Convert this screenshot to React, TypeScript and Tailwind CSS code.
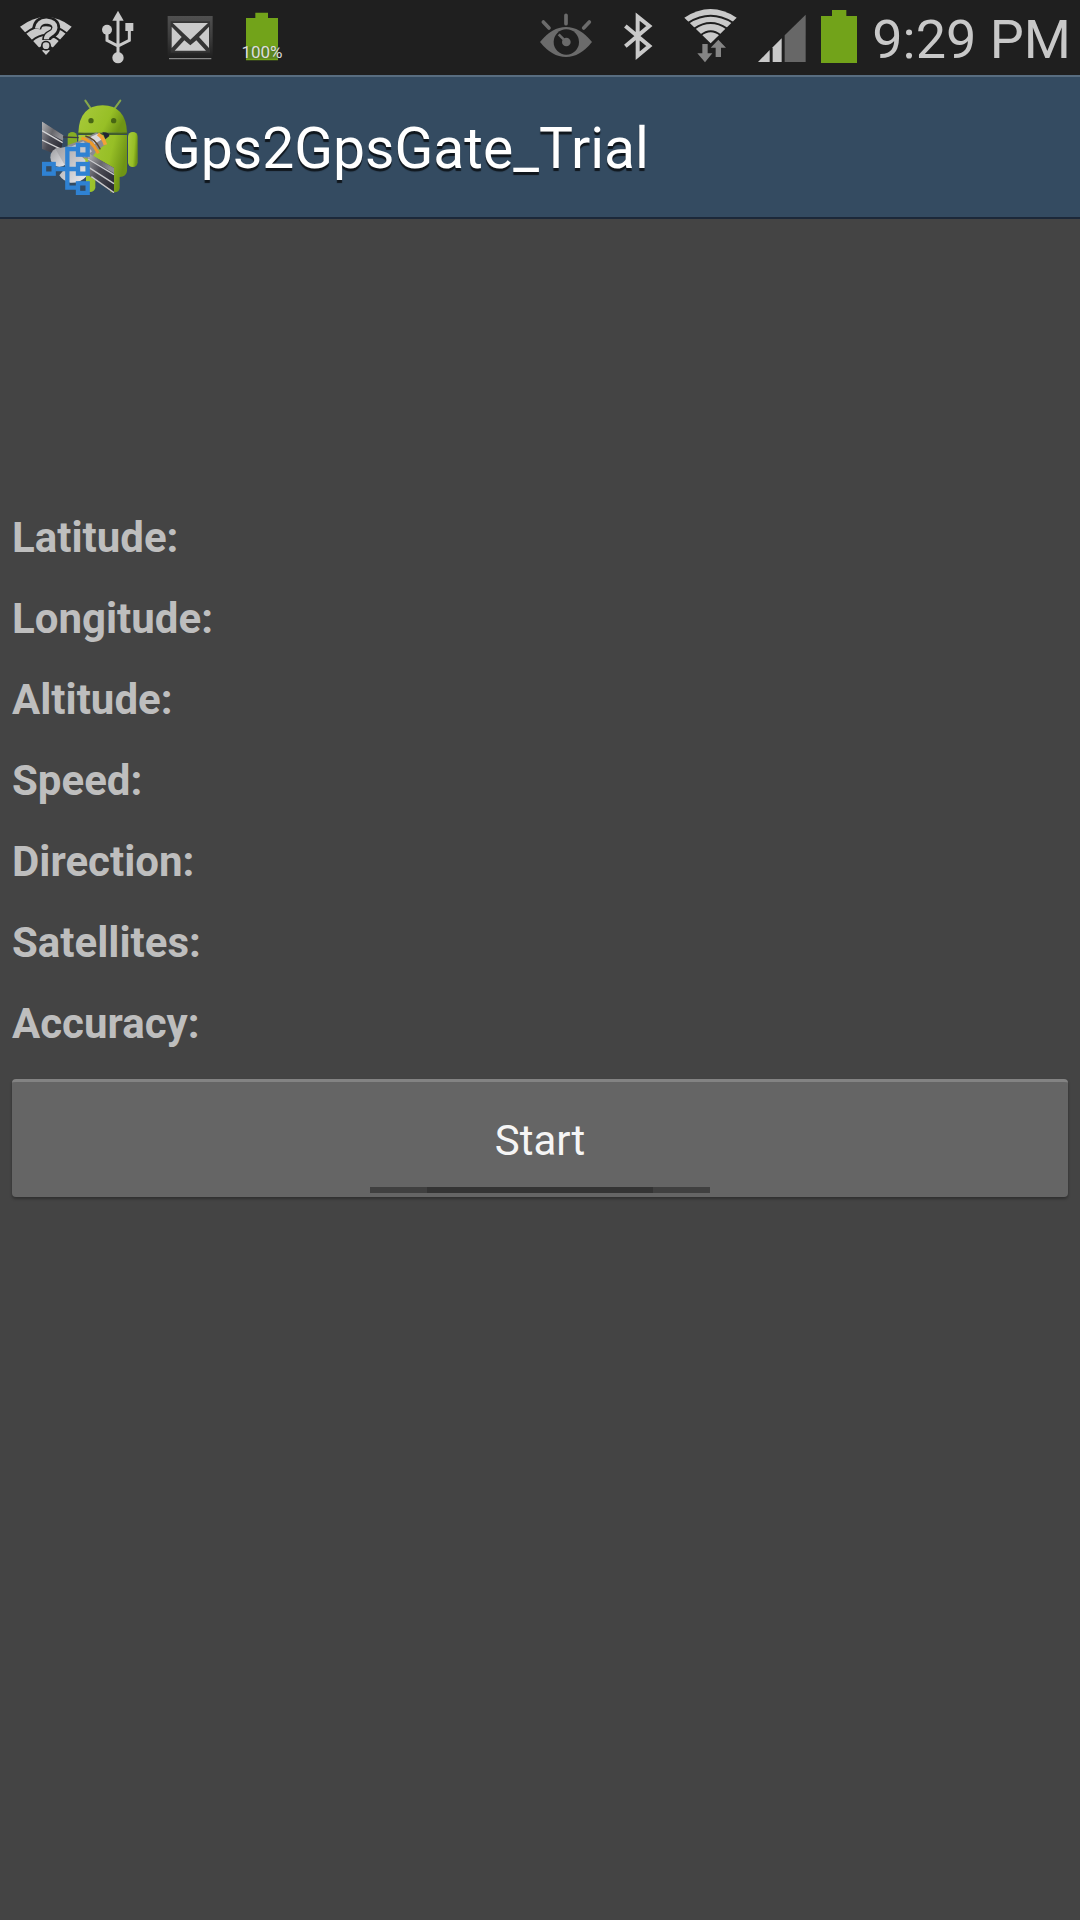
import type { ReactNode } from "react"

const FIELDS = ["Latitude", "Longitude", "Altitude", "Speed", "Direction", "Satellites", "Accuracy"]

function StatusIcon({ label, children }: { label: string; children: ReactNode }) {
  return (
    <svg className="h-[75px] w-[72px] shrink-0" viewBox="0 0 216 225" role="img" aria-label={label}>
      {children}
    </svg>
  )
}

function WifiUnknown() {
  return (
    <StatusIcon label="Wi-Fi networks available">
      <path d="M30 80Q108 22 185 80L108 165Z" fill="#c9c9c9" />
      <path d="M46 100Q108 52 170 100" fill="none" stroke="#1f1f1f" strokeWidth="6" />
      <path d="M66 122Q108 88 150 122" fill="none" stroke="#1f1f1f" strokeWidth="6" />
      <path d="M86 143Q108 126 130 143L122 153Q108 142 94 153Z" fill="#1f1f1f" />
      <g fill="none">
        <path d="M80 86Q84 62 108 62Q137 64 137 84Q137 97 122 103Q110 108 110 120" stroke="#1f1f1f" strokeWidth="27" />
        <path d="M82 86Q86 64 109 63Q135 65 135 83Q134 95 121 101Q109 107 109 118" stroke="#c9c9c9" strokeWidth="15" />
      </g>
      <circle cx="108" cy="137" r="15" fill="#1f1f1f" />
      <circle cx="108" cy="137" r="10" fill="#c9c9c9" />
    </StatusIcon>
  )
}

function Usb() {
  return (
    <StatusIcon label="USB connected">
      <path d="M108 32L125 62H91Z" fill="#c9c9c9" />
      <circle cx="108" cy="173" r="17" fill="#c9c9c9" />
      <circle cx="75" cy="89" r="15" fill="#c9c9c9" />
      <path d="M130 69H154V93H130Z" fill="#c9c9c9" />
      <path d="M108 58V160M75 98V121L108 138L142 121V90" fill="none" stroke="#c9c9c9" strokeWidth="9" />
    </StatusIcon>
  )
}

function Mail() {
  return (
    <StatusIcon label="New mail">
      <defs>
        <linearGradient id="mail" x1="0" y1="0" x2="0" y2="1">
          <stop offset="0" stopColor="#505050" />
          <stop offset="0.5" stopColor="#3c3c3c" />
          <stop offset="1" stopColor="#1d1d1d" />
        </linearGradient>
      </defs>
      <path d="M41 48H176V178H41Z" fill="url(#mail)" />
      <path d="M50 64H168V158H50Z" fill="#353535" />
      <path d="M56 69H162L109 119Z" fill="#cbcbcb" />
      <path d="M53 80L83 111L53 144Z" fill="#cbcbcb" />
      <path d="M165 80L135 111L165 144Z" fill="#cbcbcb" />
      <path d="M62 152L91 121L109 136L127 121L156 152Z" fill="#cbcbcb" />
      <path d="M45 176H172" stroke="#868686" strokeWidth="4" />
    </StatusIcon>
  )
}

function BatteryFull() {
  return (
    <div className="relative h-[75px] w-[72px] shrink-0">
      <StatusIcon label="Battery full">
        <path d="M88 38H126V54H156V181H60V54H88Z" fill="#72a31a" />
        <path d="M60 140H156V176H60Z" fill="#5c8520" />
      </StatusIcon>
      <span className="absolute inset-x-0 top-[42px] text-center text-[17px] leading-5 text-[#dddddd]">100%</span>
    </div>
  )
}

function SmartStay() {
  return (
    <StatusIcon label="Smart stay">
      <path d="M30 126Q66 81 108 81Q150 81 186 126Q150 171 108 171Q66 171 30 126Z" fill="#6b6b6b" />
      <circle cx="109" cy="126" r="38" fill="#1f1f1f" />
      <circle cx="109" cy="126" r="13" fill="#6b6b6b" />
      <path d="M86 103L101 118" stroke="#6b6b6b" strokeWidth="8" />
      <path d="M108 46V71M40 66L57 84M178 66L161 84" stroke="#6b6b6b" strokeWidth="11" strokeLinecap="round" />
    </StatusIcon>
  )
}

function Bluetooth() {
  return (
    <StatusIcon label="Bluetooth on">
      <path d="M70 78L142 138L107 167V50L142 78L70 139" fill="none" stroke="#c9c9c9" strokeWidth="12" />
    </StatusIcon>
  )
}

function Wifi() {
  return (
    <StatusIcon label="Wi-Fi connected">
      <path d="M31 53Q110 1 188 53L110 130Z" fill="#c9c9c9" />
      <path d="M44 68Q110 27 176 68" fill="none" stroke="#1f1f1f" strokeWidth="6" />
      <path d="M61 86Q110 52 159 86" fill="none" stroke="#1f1f1f" strokeWidth="6" />
      <path d="M80 106Q110 82 140 106" fill="none" stroke="#1f1f1f" strokeWidth="6" />
      <path d="M132 112L160 144H145V176H119V144H106Z" fill="#1f1f1f" />
      <path d="M133 119L156 143H141V171H125V143H110Z" fill="#858585" />
      <path d="M85 132H101V160H115L93 187L70 160H85Z" fill="#858585" />
    </StatusIcon>
  )
}

function Signal() {
  return (
    <StatusIcon label="Signal strength">
      <path d="M36 186L71 150V186Z" fill="#c9c9c9" />
      <path d="M80 186V142L107 115V186Z" fill="#c9c9c9" />
      <path d="M116 186V106L179 44V186Z" fill="#676767" />
    </StatusIcon>
  )
}

function StatusBar() {
  return (
    <div className="flex h-[75px] items-center justify-between bg-[#1f1f1f] pr-[9px] pl-[10px]">
      <div className="flex">
        <WifiUnknown />
        <Usb />
        <Mail />
        <BatteryFull />
      </div>
      <div className="flex items-center">
        <SmartStay />
        <Bluetooth />
        <Wifi />
        <Signal />
        <svg className="mx-[3px] h-[75px] w-9 shrink-0" viewBox="0 0 108 225" role="img" aria-label="Battery">
          <path d="M33 30H76V48H108V189H0V48H33Z" fill="#72a31a" />
        </svg>
        <time className="ml-3 pt-1 text-[54px] leading-[71px] whitespace-nowrap text-[#c8c8c8]">9:29 PM</time>
      </div>
    </div>
  )
}

function AppLogo() {
  return (
    <svg className="size-24 shrink-0" viewBox="36 57 288 288" aria-hidden="true">
      <defs>
        <linearGradient id="robot" x1="0" y1="0" x2="1" y2="0.3">
          <stop offset="0" stopColor="#a9cb3c" />
          <stop offset="0.7" stopColor="#97bf26" />
          <stop offset="1" stopColor="#6f9415" />
        </linearGradient>
        <linearGradient id="panel" x1="0" y1="0" x2="1" y2="0.4">
          <stop offset="0" stopColor="#b4b4b6" />
          <stop offset="0.6" stopColor="#67676c" />
          <stop offset="1" stopColor="#8d8d92" />
        </linearGradient>
        <linearGradient id="dark" x1="0" y1="0" x2="1" y2="0.6">
          <stop offset="0" stopColor="#9b9ba0" />
          <stop offset="0.5" stopColor="#4b4b54" />
          <stop offset="1" stopColor="#2e2e38" />
        </linearGradient>
        <linearGradient id="dish" x1="0" y1="0" x2="1" y2="1">
          <stop offset="0" stopColor="#9c9ca0" />
          <stop offset="1" stopColor="#ececef" />
        </linearGradient>
      </defs>

      {/* Robot */}
      <path d="M166 62L188 94M271 62L249 92" stroke="#86a84a" strokeWidth="6" strokeLinecap="round" />
      <path d="M145 158Q148 77 218 76Q288 77 291 158Z" fill="url(#robot)" />
      <path d="M145 165H291V272Q290 290 269 291V324Q267 338 252 337H240V291H196V324Q192 337 178 336Q168 334 168 322V288Q145 284 145 272Z" fill="url(#robot)" />
      <rect x="294" y="156" width="29" height="105" rx="14" fill="url(#robot)" />
      <rect x="113" y="156" width="28" height="70" rx="14" fill="#86ad24" />
      <path d="M145 160Q220 165 291 160" stroke="#47651a" strokeWidth="4" fill="none" />
      <circle cx="183" cy="122" r="8" fill="#486614" />
      <circle cx="251" cy="122" r="8" fill="#486614" />

      {/* Satellite */}
      <path d="M36 125L100 166L92 228L36 207Z" fill="url(#dark)" />
      <path d="M36 125L100 166L99 182L36 149Z" fill="url(#panel)" />
      <path d="M36 152L98 188M36 180L94 208" stroke="#d4d4d6" strokeWidth="4" />
      <path d="M99 171L146 173" stroke="#3c3c40" strokeWidth="4" />
      <path d="M112 196L146 184L200 157L228 192L200 212L182 238L148 232Z" fill="#8b8b90" />
      <path d="M122 200L160 184L186 214L164 232Z" fill="#c6c6ca" />
      <path d="M180 172L206 160L218 176L194 192Z" fill="#d9d9dc" />
      <path d="M154 174Q186 180 205 220" stroke="#ef9a2a" strokeWidth="9" fill="none" />
      <path d="M166 168Q194 174 211 208" stroke="#5b4428" strokeWidth="4" fill="none" />
      <path d="M204 162Q220 172 226 194" stroke="#f2a139" strokeWidth="11" fill="none" />
      <path d="M217 157Q238 156 238 168L226 178Z" fill="#222634" />
      <ellipse cx="88" cy="232" rx="27" ry="29" fill="url(#dish)" />
      <path d="M76 206L122 198L166 240L168 290Q150 310 120 308Q98 302 88 286L108 262Z" fill="url(#dish)" />
      <path d="M174 219L252 264V342L174 285Z" fill="url(#dark)" />
      <path d="M174 219L252 264V280L174 234Z" fill="url(#panel)" />
      <path d="M174 237L252 284M176 262L252 311M184 290L252 338" stroke="#c9c9cc" strokeWidth="4" />

      {/* Network nodes */}
      <g fill="none" stroke="#2f82d3" strokeWidth="13">
        <rect x="42" y="252" width="29" height="29" />
        <rect x="144" y="195" width="29" height="29" />
        <rect x="144" y="252" width="29" height="29" />
        <rect x="144" y="310" width="29" height="29" />
        <path d="M76 267H138M138 207H112V323H138" />
      </g>
    </svg>
  )
}

function Header() {
  return (
    <header className="flex h-36 items-center gap-6 border-t-2 border-b-2 border-t-[#586d80] border-b-[#1c2839] bg-[#344b61] pl-[42px]">
      <AppLogo />
      <h1 className="truncate pt-1 text-[57px] leading-[72px] text-white [text-shadow:0_3px_1px_rgba(0,0,0,0.7)]">
        Gps2GpsGate_Trial
      </h1>
    </header>
  )
}

export default function App() {
  return (
    <div className="flex min-h-screen flex-col bg-[#444444] font-[Roboto,sans-serif]">
      <StatusBar />
      <Header />
      <main className="px-3 pt-[278px]">
        <dl className="text-[42px] leading-[81px] font-bold text-[#bebebe]">
          {FIELDS.map((field) => (
            <div key={field} className="flex gap-3">
              <dt>{field}:</dt>
              <dd />
            </div>
          ))}
        </dl>
        <button
          type="button"
          className="relative mt-[15px] h-[118px] w-full rounded-[4px] border-t-[3px] border-t-[#838383] bg-[#656565] pt-0.5 text-[42px] text-[#f5f5f5] shadow-[0_2px_3px_rgba(0,0,0,0.3)]"
        >
          Start
          <span className="absolute inset-x-0 bottom-1 mx-auto flex h-[6px] w-[340px] justify-center bg-[#404040]">
            <span className="w-2/3 bg-[#343434]" />
          </span>
        </button>
      </main>
    </div>
  )
}
